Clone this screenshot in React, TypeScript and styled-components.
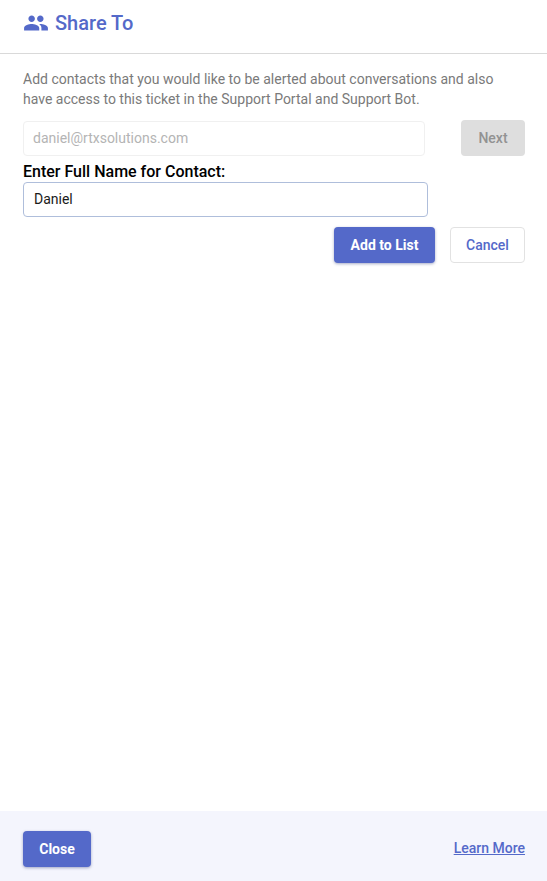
import React from 'react';
import styled, { createGlobalStyle } from 'styled-components';
import { MdPeople } from 'react-icons/md';

const GlobalStyle = createGlobalStyle`
  html, body { margin: 0; padding: 0; background: #fff; }
  body { font-family: Roboto, "Liberation Sans", sans-serif; }
  * { box-sizing: border-box; }
`;

const Page = styled.div`
  display: flex;
  flex-direction: column;
  height: 881px;
  width: 547px;
  overflow: hidden;
`;

const Header = styled.header`
  display: flex;
  align-items: center;
  gap: 6px;
  height: 54px;
  padding: 0 23px 8px;
  border-bottom: 1px solid #d9d9d9;
  color: #5469c9;
`;

const Title = styled.h1`
  margin: 0;
  font-size: 20px;
  font-weight: 500;
  line-height: 24px;
`;

const Content = styled.main`
  flex: 1;
  display: flex;
  flex-direction: column;
  padding: 15px 22px 0 23px;
`;

const Intro = styled.p`
  margin: 0 0 11px;
  font-size: 14px;
  line-height: 20px;
  color: #7a7a7a;
`;

const EmailRow = styled.div`
  display: flex;
  justify-content: space-between;
  align-items: flex-end;
`;

const Input = styled.input<{ $width: number }>`
  display: block;
  width: ${(p) => p.$width}px;
  height: 35px;
  padding: 0 10px 2px;
  border-radius: 4px;
  font: 400 14px Roboto, sans-serif;
  outline: none;
  background: #fff;
`;

const EmailInput = styled(Input)`
  padding-left: 9px;
  border: 1px solid #f0f0f0;
  &::placeholder { color: #b4b4b4; opacity: 1; }
`;

const NameInput = styled(Input)`
  border: 1px solid #afbedb;
  color: #1a1a1a;
`;

const Label = styled.label`
  display: block;
  margin: 6px 0 0;
  font-size: 16px;
  font-weight: 500;
  line-height: 20px;
  color: #000;
`;

const Button = styled.button<{ $width: number }>`
  width: ${(p) => p.$width}px;
  height: 36px;
  padding: 0 0 1px;
  border-radius: 4px;
  font: 700 14px Roboto, sans-serif;
  cursor: pointer;
`;

const PrimaryButton = styled(Button)`
  border: none;
  background: #5469c9;
  color: #fff;
  box-shadow: 0 1px 3px rgba(60, 70, 130, 0.45);
`;

const OutlineButton = styled(Button)`
  border: 1px solid #e2e2e2;
  background: #fff;
  color: #5469c9;
  font-weight: 500;
`;

const DisabledButton = styled(Button)`
  border: none;
  background: #dedede;
  color: #929292;
  font-weight: 500;
`;

const Actions = styled.div`
  display: flex;
  justify-content: flex-end;
  gap: 15px;
  margin-top: 10px;
`;

const Footer = styled.footer`
  display: flex;
  align-items: center;
  justify-content: space-between;
  height: 70px;
  padding: 6px 22px 0 23px;
  background: #f4f5fd;
`;

const LearnMore = styled.a`
  margin-top: -2px;
  font-size: 14px;
  font-weight: 500;
  color: #5469c9;
  text-decoration: underline;
`;

export default function App(): JSX.Element {
  return (
    <Page>
      <GlobalStyle />
      <Header>
        <MdPeople size={26} />
        <Title>Share To</Title>
      </Header>
      <Content>
        <Intro>
          Add contacts that you would like to be alerted about conversations and also
          <br />
          have access to this ticket in the Support Portal and Support Bot.
        </Intro>
        <EmailRow>
          <EmailInput $width={402} placeholder="daniel@rtxsolutions.com" readOnly />
          <DisabledButton $width={64}>Next</DisabledButton>
        </EmailRow>
        <Label htmlFor="full-name">Enter Full Name for Contact:</Label>
        <NameInput $width={405} id="full-name" defaultValue="Daniel" />
        <Actions>
          <PrimaryButton $width={101}>Add to List</PrimaryButton>
          <OutlineButton $width={75}>Cancel</OutlineButton>
        </Actions>
      </Content>
      <Footer>
        <PrimaryButton $width={68}>Close</PrimaryButton>
        <LearnMore href="#">Learn More</LearnMore>
      </Footer>
    </Page>
  );
}
